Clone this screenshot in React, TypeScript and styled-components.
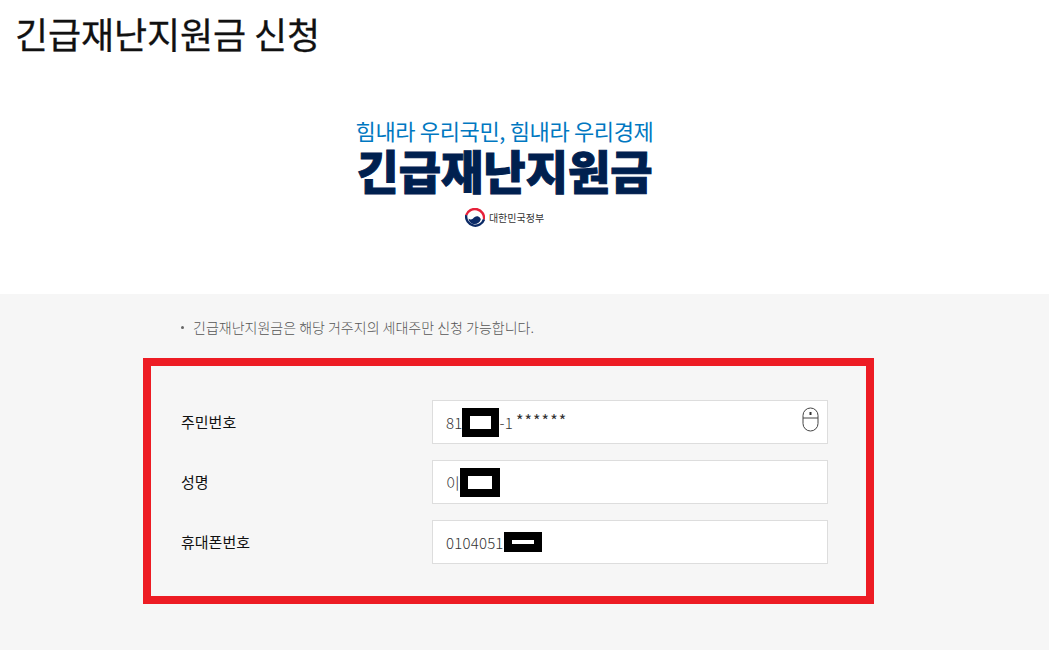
import React from 'react';
import styled, { createGlobalStyle } from 'styled-components';

const GlobalStyle = createGlobalStyle`
  html, body {
    margin: 0;
    padding: 0;
    background: #fff;
    font-family: "Noto Sans CJK KR", "Noto Sans", sans-serif;
  }
  * {
    box-sizing: border-box;
  }
`;

type FieldItem = {
  label: string;
  before: string;
  mask: { width: number; height: number };
  after?: string;
  hidden?: string;
  mouse?: boolean;
};

const fields: FieldItem[] = [
  {
    label: '주민번호',
    before: '81',
    mask: { width: 37, height: 29 },
    after: '-1',
    hidden: '******',
    mouse: true,
  },
  {
    label: '성명',
    before: '이',
    mask: { width: 40, height: 29 },
  },
  {
    label: '휴대폰번호',
    before: '0104051',
    mask: { width: 38, height: 20 },
  },
];

const Emblem = () => (
  <svg width="20" height="20" viewBox="0 0 20 20">
    <circle cx="10" cy="10" r="9.5" fill="#fff" />
    <path d="M1.2 7.2A9.2 9.2 0 0 1 19 11.5" fill="none" stroke="#e6213a" strokeWidth="2.4" />
    <path d="M19 11.5A9.2 9.2 0 0 1 1.2 7.2" fill="none" stroke="#0b2a66" strokeWidth="2.4" />
    <path
      d="M3.6 10.5c1.2 1.3 2.8 1.3 4.2.2 1.5-1.2 3.2-3 5.4-2.2 1.5.5 2.4 1.7 2.6 3-1 2.8-3.2 4.6-6 4.6-3.4 0-6-2.4-6.2-5.6z"
      fill="#0b2a66"
    />
  </svg>
);

const MouseIcon = () => (
  <svg width="17" height="25" viewBox="0 0 17 25" fill="none">
    <rect x="1" y="1" width="15" height="23" rx="7.5" stroke="#444" strokeWidth="1" />
    <path d="M1 11h15" stroke="#444" strokeWidth="1" />
    <rect x="7.5" y="5" width="2" height="3" fill="#333" />
  </svg>
);

export default function App() {
  return (
    <>
      <GlobalStyle />
      <Title>긴급재난지원금 신청</Title>
      <Hero>
        <Slogan>힘내라 우리국민, 힘내라 우리경제</Slogan>
        <BrandName>긴급재난지원금</BrandName>
        <Government>
          <Emblem />
          <GovernmentName>대한민국정부</GovernmentName>
        </Government>
      </Hero>
      <FormSection>
        <Notice>
          <NoticeDot />
          긴급재난지원금은 해당 거주지의 세대주만 신청 가능합니다.
        </Notice>
        <FormFrame>
          {fields.map((field) => (
            <Row key={field.label}>
              <Label>{field.label}</Label>
              <InputBox>
                <Value>{field.before}</Value>
                <Mask $width={field.mask.width} $height={field.mask.height} />
                {field.after && <Value>{field.after}</Value>}
                {field.hidden && <HiddenValue>{field.hidden}</HiddenValue>}
                {field.mouse && (
                  <MouseSlot>
                    <MouseIcon />
                  </MouseSlot>
                )}
              </InputBox>
            </Row>
          ))}
        </FormFrame>
      </FormSection>
    </>
  );
}

const Title = styled.h1`
  margin: 0;
  padding: 7px 0 0 15px;
  height: 70px;
  font-size: 36px;
  line-height: 52px;
  font-weight: 400;
  color: #111;
  letter-spacing: -0.1px;
  -webkit-text-stroke: 0.3px #111;
`;

const Hero = styled.div`
  height: 224px;
  display: flex;
  flex-direction: column;
  align-items: center;
  padding: 45px 40px 0 0;
`;

const Slogan = styled.div`
  font-size: 22px;
  line-height: 30px;
  font-weight: 400;
  color: #0078c1;
  letter-spacing: -0.35px;
`;

const BrandName = styled.div`
  margin-top: 1px;
  font-size: 46px;
  line-height: 46px;
  font-weight: 900;
  color: #00204f;
  -webkit-text-stroke: 1px #00204f;
`;

const Government = styled.div`
  margin-top: 16px;
  display: flex;
  align-items: center;
  gap: 4px;
`;

const GovernmentName = styled.span`
  font-size: 10px;
  line-height: 20px;
  color: #333;
`;

const FormSection = styled.section`
  height: 356px;
  background: #f6f6f6;
  padding: 21px 175px 0 143px;
`;

const Notice = styled.p`
  margin: 0 0 19px 38px;
  display: flex;
  align-items: center;
  height: 24px;
  font-size: 14px;
  font-weight: 300;
  color: #555;
`;

const NoticeDot = styled.span`
  width: 3px;
  height: 3px;
  margin-right: 9px;
  border-radius: 50%;
  background: #666;
`;

const FormFrame = styled.div`
  width: 731px;
  height: 246px;
  border: 8px solid #ed1c24;
  padding: 34px 38px 32px 30px;
  display: flex;
  flex-direction: column;
  gap: 16px;
`;

const Row = styled.div`
  display: flex;
  align-items: center;
`;

const Label = styled.label`
  width: 251px;
  padding-bottom: 2px;
  font-size: 15px;
  color: #111;
`;

const InputBox = styled.div`
  width: 396px;
  height: 44px;
  display: flex;
  align-items: center;
  padding-left: 13px;
  background: #fff;
  border: 1px solid #ddd;
`;

const Value = styled.span`
  font-size: 15px;
  font-weight: 300;
  color: #333;
  letter-spacing: 0.2px;
`;

const HiddenValue = styled(Value)`
  margin: -4px 0 0 3px;
  font-size: 16px;
  font-weight: 400;
  letter-spacing: 1.1px;
`;

const Mask = styled.span<{ $width: number; $height: number }>`
  width: ${({ $width }) => $width}px;
  height: ${({ $height }) => $height}px;
  border: 8px solid #000;
  background: #fff;
  flex-shrink: 0;
`;

const MouseSlot = styled.span`
  margin-left: auto;
  margin-right: 8px;
  align-self: flex-start;
  margin-top: 6px;
  display: flex;
`;
